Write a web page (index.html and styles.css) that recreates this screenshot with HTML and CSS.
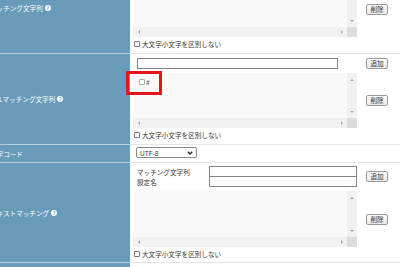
FILE: index.html
```html
<!DOCTYPE html>
<html lang="ja">
<head>
    <meta charset="UTF-8">
    <meta name="viewport" content="width=device-width, initial-scale=1.0">
    <title>マッチング設定</title>
    <link rel="stylesheet" href="styles.css">
</head>
<body>
    <div class="settings">
        <!-- マッチング文字列 -->
        <div class="row">
            <div class="label">マッチング文字列<span class="help">?</span></div>
            <div class="field">
                <div class="add-line">
                    <input type="text" class="text-input">
                    <button class="btn">追加</button>
                </div>
                <div class="list-line">
                    <div class="listbox">
                        <div class="list-body"></div>
                        <div class="vbar"><span class="arrow up"></span><span class="arrow down"></span></div>
                        <div class="hbar"><span class="arrow left"></span><span class="arrow right"></span></div>
                        <div class="corner"></div>
                    </div>
                    <button class="btn">削除</button>
                </div>
                <label class="check"><span class="box"></span>大文字小文字を区別しない</label>
            </div>
        </div>

        <!-- URLマッチング文字列 -->
        <div class="row">
            <div class="label">URLマッチング文字列<span class="help">?</span></div>
            <div class="field">
                <div class="add-line">
                    <input type="text" class="text-input">
                    <button class="btn">追加</button>
                </div>
                <div class="list-line">
                    <div class="listbox">
                        <div class="list-body">
                            <span class="item"><span class="box light"></span>#<span class="mark"></span></span>
                        </div>
                        <div class="vbar"><span class="arrow up"></span><span class="arrow down"></span></div>
                        <div class="hbar"><span class="arrow left"></span><span class="arrow right"></span></div>
                        <div class="corner"></div>
                    </div>
                    <button class="btn">削除</button>
                </div>
                <label class="check"><span class="box"></span>大文字小文字を区別しない</label>
            </div>
        </div>

        <!-- 文字コード -->
        <div class="row">
            <div class="label">文字コード</div>
            <div class="field compact">
                <div class="select">
                    <span>UTF-8</span>
                    <svg width="6" height="4" viewBox="0 0 6 4"><polyline points="0.7,0.7 3,3 5.3,0.7" fill="none" stroke="#222" stroke-width="1.3"/></svg>
                </div>
            </div>
        </div>

        <!-- テキストマッチング -->
        <div class="row">
            <div class="label">テキストマッチング<span class="help">?</span></div>
            <div class="field tall">
                <div class="pair-line">
                    <div class="pair">
                        <span>マッチング文字列</span>
                        <input type="text" class="text-input">
                        <span>設定名</span>
                        <input type="text" class="text-input second">
                    </div>
                    <button class="btn">追加</button>
                </div>
                <div class="list-line">
                    <div class="listbox big">
                        <div class="list-body"></div>
                        <div class="vbar"><span class="arrow up"></span><span class="arrow down"></span></div>
                        <div class="hbar"><span class="arrow left"></span><span class="arrow right"></span></div>
                        <div class="corner"></div>
                    </div>
                    <button class="btn">削除</button>
                </div>
                <label class="check"><span class="box"></span>大文字小文字を区別しない</label>
            </div>
        </div>

        <div class="row">
            <div class="label"></div>
            <div class="field"></div>
        </div>
    </div>
</body>
</html>
```

FILE: styles.css
```css
html, body {
    margin: 0;
    padding: 0;
}

body {
    width: 400px;
    height: 267px;
    overflow: hidden;
    background: #ffffff;
    font-family: "Noto Sans CJK JP", sans-serif;
    font-size: 6.6px;
    color: #333;
}

.settings {
    margin: -37px 0 0 -10px;
    width: 430px;
}

.row {
    display: grid;
    grid-template-columns: 140px 1fr;
}

.label {
    display: flex;
    align-items: center;
    background-color: #689bba;
    color: #ffffff;
    border-bottom: 1px solid #b7cedc;
    white-space: nowrap;
}

.help {
    display: inline-block;
    width: 6px;
    height: 6px;
    margin-left: 2px;
    border-radius: 50%;
    background: #ffffff;
    color: #689bba;
    font-size: 5px;
    font-weight: bold;
    line-height: 6px;
    text-align: center;
}

.field {
    padding: 4px 0 4px 3px;
    border-bottom: 1px solid #e6e6e6;
}

.field.compact {
    padding: 2px 0 4px 3px;
}

.field.tall {
    padding: 3px 0 3px 3px;
}

.add-line {
    display: flex;
    justify-content: space-between;
    width: 255px;
    height: 11px;
}

.text-input {
    box-sizing: border-box;
    height: 11px;
    margin: 0;
    padding: 0;
    border: 1px solid #858585;
    background: #ffffff;
}

.add-line .text-input {
    width: 201px;
    margin-left: 4px;
}

.btn {
    box-sizing: border-box;
    width: 22px;
    height: 11px;
    padding: 0;
    border: 1px solid #9a9a9a;
    border-radius: 2px;
    background: linear-gradient(#fbfbfb, #e9e9e9);
    font: inherit;
    line-height: 9px;
    color: #333;
}

.list-line {
    display: flex;
    align-items: center;
    gap: 9px;
    margin-top: 4px;
}

.listbox {
    display: grid;
    grid-template-columns: 1fr 10px;
    grid-template-rows: 1fr 10px;
    width: 224px;
    height: 55px;
    background: #f9f9f9;
}

.listbox.big {
    height: 56px;
}

.list-body {
    padding: 4px 0 0 6px;
}

.vbar {
    display: flex;
    flex-direction: column;
    justify-content: space-between;
    align-items: center;
    padding: 6px 0 5px;
    background: #f1f1f1;
}

.hbar {
    display: flex;
    justify-content: space-between;
    align-items: center;
    padding: 0 4px 0 5px;
    background: #f1f1f1;
}

.corner {
    background: #dcdcdc;
}

.arrow {
    width: 0;
    height: 0;
    border: 2px solid transparent;
}

.arrow.up {
    border-top: 0;
    border-bottom-color: #a3a3a3;
}

.arrow.down {
    border-bottom: 0;
    border-top-color: #a3a3a3;
}

.arrow.left {
    border-left: 0;
    border-right-color: #a3a3a3;
}

.arrow.right {
    border-right: 0;
    border-left-color: #a3a3a3;
}

.item {
    position: relative;
    display: inline-flex;
    align-items: center;
    gap: 1px;
    color: #555;
    line-height: 7px;
}

.mark {
    position: absolute;
    left: -13px;
    top: -8px;
    width: 36px;
    height: 24px;
    box-sizing: border-box;
    border: 3px solid #e5141c;
}

.check {
    display: flex;
    align-items: center;
    gap: 2px;
    height: 11px;
    margin-top: 1px;
    padding-left: 1px;
}

.box {
    box-sizing: border-box;
    width: 6px;
    height: 6px;
    border: 1px solid #777;
    border-radius: 1px;
    background: #ffffff;
}

.box.light {
    border-color: #aaa;
}

.select {
    box-sizing: border-box;
    display: flex;
    justify-content: space-between;
    align-items: center;
    width: 61px;
    height: 11px;
    margin-left: 3px;
    padding: 0 3px;
    border: 1px solid #8a8a8a;
    border-radius: 2px;
    background: #ffffff;
}

.pair-line {
    display: flex;
    align-items: center;
    gap: 9px;
}

.pair {
    display: grid;
    grid-template-columns: 72px 148px;
    grid-template-rows: 11px 10px;
    align-items: center;
    margin-left: 4px;
}

.pair .text-input {
    width: 148px;
}

.pair .second {
    align-self: end;
    margin-top: -1px;
}
```
